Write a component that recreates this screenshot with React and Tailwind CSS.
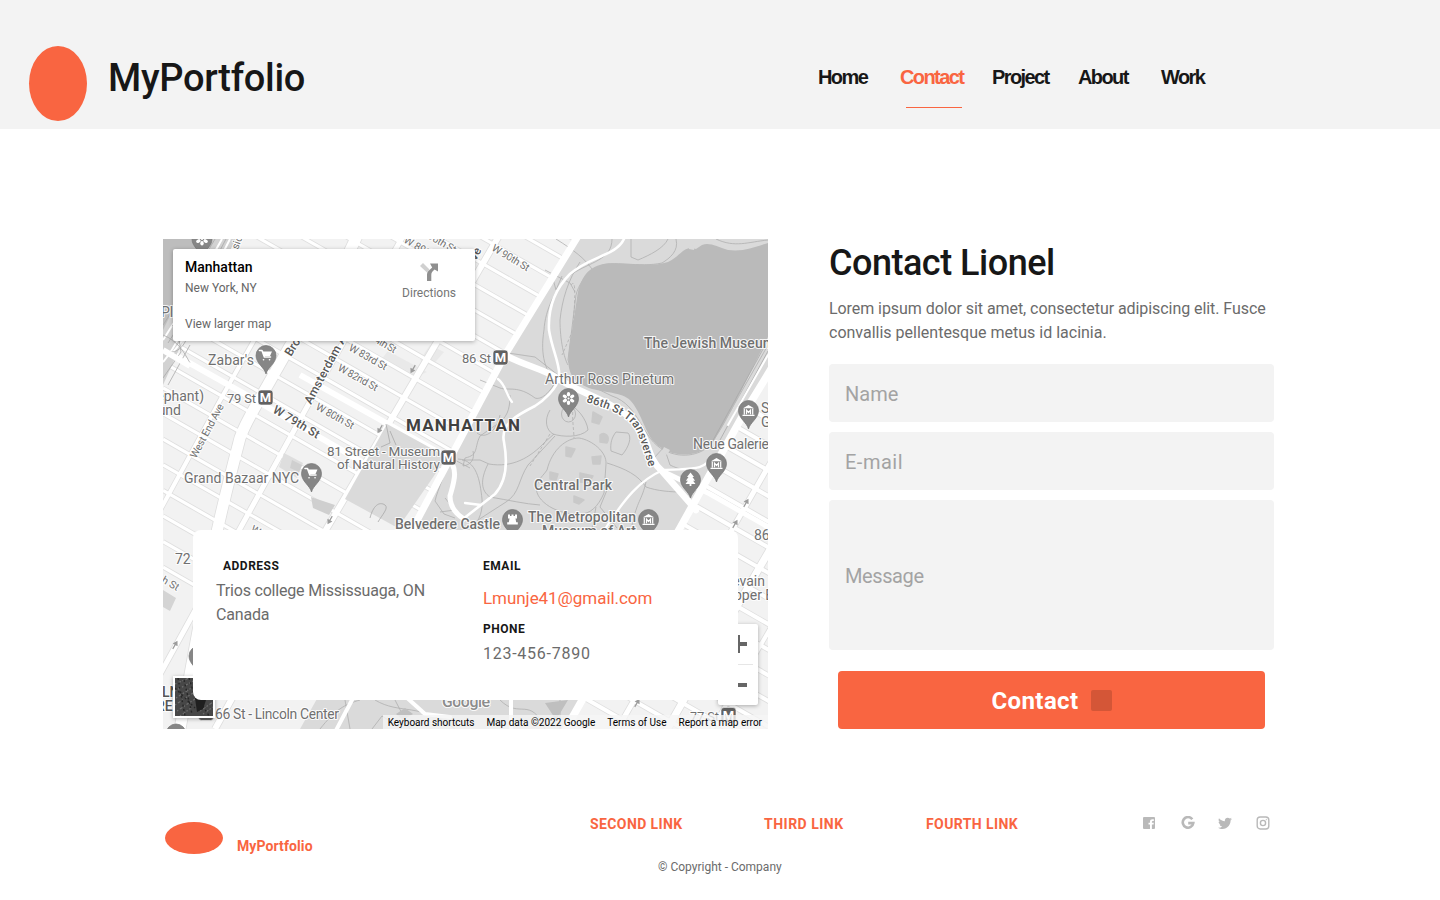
import React from "react";

const rot = (x, y, a) => `rotate(${a} ${x} ${y})`;

function Label({ x, y, size = 14, w, weight = 400, fill = "#707070", angle = 0, anchor = "start", halo = "#fff", children }) {
  return (
    <text
      x={x}
      y={y}
      fontSize={size}
      fontWeight={weight}
      fill={fill}
      textAnchor={anchor}
      textLength={w}
      transform={angle ? rot(x, y, angle) : undefined}
      stroke={halo}
      strokeWidth="2.2"
      strokeOpacity="0.85"
      strokeLinejoin="round"
      paintOrder="stroke"
    >
      {children}
    </text>
  );
}

const Cart = () => (
  <g>
    <path d="M-6.500 -5H-4L-1.600 1.500H4.500M-2.500 4.300h.1M3.500 4.300h.1" stroke="#fff" strokeWidth="1.600" fill="none" strokeLinecap="round" strokeLinejoin="round" />
    <path d="M-3.800 -4H6L4 .6H-2.200Z" fill="#fff" />
  </g>
);
const Museum = () => (
  <g fill="none" stroke="#fff" strokeWidth="1.200">
    <path d="M-5.500 -2.200L0 -5.400L5.500 -2.200Z" fill="#fff" stroke="none" />
    <path d="M-4.200 -2V4M4.200 -2V4M-6 4.800H6M-2 3.800V-.3L0 2L2 -.3V3.800" />
  </g>
);
const Tree = () => <path d="M0 -7L3.500 -2.600H2L4.600 1.200H2.600L5 4.400H.9V6.600H-.9V4.400H-5L-2.600 1.200H-4.600L-2 -2.600H-3.500Z" fill="#fff" />;
const Rook = () => <path d="M-4.500 -5h2v1.600h1.500V-5h2v1.600h1.500V-5h2v4h-1.500l.7 3.800h1.600V5H-5.300V2.800h1.600L-3 -1h-1.500Z" fill="#fff" />;
const Flower = () => (
  <g fill="#fff">
    {[0, 60, 120, 180, 240, 300].map((a) => (
      <ellipse key={a} cx="0" cy="-4.200" rx="1.700" ry="2.300" transform={`rotate(${a})`} />
    ))}
    <circle r="1.100" />
  </g>
);

function Pin({ x, y, children }) {
  return (
    <g transform={`translate(${x} ${y})`}>
      <path d="M0 18.500C-1.500 12 -10 8 -10 0A10 10 0 0 1 10 0C10 8 1.500 12 0 18.500Z" fill="#868686" stroke="#757575" strokeWidth=".7" />
      {children}
    </g>
  );
}

function Metro({ x, y }) {
  return (
    <g transform={`translate(${x} ${y})`}>
      <rect x="-7.500" y="-7.500" width="15" height="15" rx="3" fill="#616161" stroke="#fff" strokeWidth=".6" />
      <text y="4.600" fontSize="13" fontWeight="700" fill="#fff" textAnchor="middle">M</text>
    </g>
  );
}

const westStreets = Array.from({ length: 28 }, (_, i) => -124 + i * 25.6);
const eastStreets = Array.from({ length: 16 }, (_, i) => 300 + i * 25.6);
const westAves = [
  ["M360 229C340 275 318 310 290 346L258 402C250 416 244 426 240 438C229 480 221 510 211 560L180 729", 11],
  ["M407 229L308 405L225 556L130 729", 5],
  ["M503 229L437 342L327 528L215 729", 6],
  ["M300 259L223 395L163 505L120 580", 4],
];

function StreetMap() {
  return (
    <svg className="block h-full w-full" viewBox="163 239 605 490" fontFamily="Roboto, sans-serif">
      <defs>
        <clipPath id="west"><path d="M163 239H576L505 355L412 530L300 729H163Z" /></clipPath>
        <clipPath id="east"><path d="M768 375L680 528L565 729H768Z" /></clipPath>
      </defs>
      <rect x="163" y="239" width="605" height="490" fill="#dadada" />

      {/* western blocks */}
      <g clipPath="url(#west)">
        <rect x="163" y="239" width="413" height="490" fill="#f2f2f2" />
        <path d="M388 351L427 372L416 377L380 361ZM430 345L444 352L432 366L420 360Z" fill="#e9e9e9" />
        {["#dedede", "#fff"].map((c, n) => (
          <g key={c} stroke={c} fill="none">
            {westStreets.map((v) => (
              <path key={v} d={`M163 ${v}L600 ${v + 250}`} strokeWidth={n ? 3.2 : 4.8} />
            ))}
            {westAves.map(([d, w]) => (
              <path key={d} d={d} strokeWidth={n ? w : w + 1.6} />
            ))}
          </g>
        ))}
        <path d="M163 348L257 401L345 452L395 482" stroke="#fff" strokeWidth="6" fill="none" />
        <path d="M300 375L388 424L450 459" stroke="#fff" strokeWidth="6" fill="none" />
        {/* riverside */}
        <path d="M163 239H236L181 345L163 385Z" fill="#d2d2d2" />
        <path d="M163 239H208L163 330Z" fill="#bdbdbd" />
        <g fill="none" stroke="#fff" strokeWidth="2">
          <path d="M222 239L182 310L163 340M230 239L190 317C181 333 174 350 163 362M238 239L195 325L170 356" />
        </g>
        <g fill="none" stroke="#a9a9a9" strokeWidth=".8">
          <path d="M215 239L176 305L163 325M226 239L187 313L168 343M172 326C184 319 191 328 186 340C182 350 171 356 164 349M163 335C178 341 184 352 190 363M176 320L181 352L163 378M168 385L190 345" />
        </g>
        <path d="M163 350L190 366" stroke="#fff" strokeWidth="6" />
        {/* museum grounds */}
        <path d="M387 424L447 457L398 528L345 499Z" fill="#dadada" />
        <path d="M284 453L303 463L297 478L279 467Z" fill="#dedede" />
        <path d="M292 460L302 465L299 472L290 468ZM311 497L335 505L329 515L313 508Z" fill="#cfcfcf" />
        <path d="M163 590L176 598L170 611L163 607Z" fill="#d4d4d4" />
        <path d="M370 518C373 506 379 501 385 505C389 508 382 515 378 522M386 424L390 443L381 447M390 431L396 445" stroke="#a8a8a8" strokeWidth=".8" fill="none" />
      </g>

      {/* eastern blocks */}
      <g clipPath="url(#east)">
        <rect x="560" y="370" width="208" height="359" fill="#f2f2f2" />
        {["#dedede", "#fff"].map((c, n) => (
          <g key={c} stroke={c} fill="none">
            {eastStreets.map((v) => (
              <path key={v} d={`M560 ${v}L780 ${v + 126}`} strokeWidth={n ? 4 : 5.6} />
            ))}
            <path d="M795 420L733 528L610 742" strokeWidth={n ? 5 : 6.6} />
            <path d="M815 472L725 627L660 742" strokeWidth={n ? 7 : 8.6} />
            <path d="M810 560L712 729" strokeWidth={n ? 4 : 5.6} />
          </g>
        ))}
      </g>

      {/* park paths */}
      <g fill="none" stroke="#b0b0b0" strokeWidth=".8">
        <path d="M612 239C612 260 590 262 572 274C556 286 545 310 544 330C540 355 545 372 558 385M556 239C575 251 584 258 592 269M545 270L570 283L575 292M631 239V257L638 260C650 255 664 248 668 239M580 262C568 280 562 300 560 320C560 340 564 358 568 365M553 279L556 290L562 276" />
        <path d="M768 240C748 242 735 248 716 239M676 239C679 251 670 258 662 263C640 268 610 260 600 266C586 272 578 286 576 295L568 360L575 378L612 396C640 405 642 440 664 450C682 460 705 455 714 440L768 345" />
        <path d="M508 353L535 357L558 375M558 376C550 395 540 400 535 398C518 385 508 391 500 388L480 380" />
        <path d="M510 395C510 410 507 418 496 425L480 436C474 448 479 455 465 458L463 466C471 465 475 459 473 451M462 460H480L489 464C512 468 530 458 545 442L554 434" />
        <path d="M458 459C477 460 480 481 482 499C483 510 480 520 472 528M488 464C480 480 481 491 490 497C508 500 525 504 540 505M477 433C486 440 497 430 500 415M550 410C544 420 546 430 553 434C562 437 580 438 588 430C587 420 577 406 566 403" />
        <ellipse cx="568.500" cy="414" rx="7" ry="8" />
        <path d="M547 470C552 449 567 438 579 438C592 440 607 452 606 464L604 493C598 507 590 514 580 514C552 515 533 497 537 486C539 478 543 476 547 470Z" />
        <path d="M555 436L528 465C518 480 520 493 506 502L478 520M607 463C626 469 638 475 646 487C657 491 671 492 682 492M607 490L600 507L617 528M646 482C642 500 637 501 632 525M596 507L592 528" />
        <path d="M616 432L628 433C632 437 629 447 622 455L611 451C610 443 612 437 616 432ZM654 458L664 447L670 465C690 475 700 468 714 458" />
        <path d="M435 501C438 488 446 474 448 459M435 501L444 514L455 518M445 498L455 510L440 512M449 457L470 468" />
        <path d="M550 434L530 466M574 402C571 415 574 430 574 438M571 285C575 280 576 285 573 330L562 355" strokeDasharray="3 2" />
        <path d="M320 729C335 710 345 704 360 700M345 700L350 729M375 700C400 715 420 702 455 729M500 700C520 720 530 695 545 729M560 700V729M395 700L410 729M372 729L382 716L402 729" />
      </g>

      {/* reservoir */}
      <path d="M768 243C754 247 744 252 728 250C717 247 710 242 702 245L696 249C684 244 680 257 668 262C650 268 625 262 604 264C585 267 579 283 577 298L569 350C566 374 573 382 592 389C612 394 626 392 634 405C645 422 647 439 660 447C674 457 695 457 708 447C724 430 738 396 768 337Z" fill="#bababa" />
      <path d="M689 247L695 245L694 250L689 249ZM664 447L670 450L667 455L662 451Z" fill="#dadada" />
      <path d="M768 340L711 444M768 351L720 440" stroke="#a8a8a8" strokeWidth=".8" />

      {/* lawn patches */}
      <path d="M593 412L602 417L599 424L592 422ZM600 435C604 431 611 436 607 443L600 442ZM566 447L575 449L571 457L566 456ZM592 457L601 456L600 464L593 464ZM580 473L593 476L589 483L580 482ZM550 472L558 474L556 480L550 479ZM574 496L584 500L579 504L574 502Z" fill="#c9c9c9" stroke="#c9c9c9" strokeWidth="1.500" strokeLinejoin="round" />
      <path d="M405 708L413 714L403 720L396 714ZM545 703L568 700L556 720Z" fill="#bfbfbf" />

      {/* park roads */}
      <g fill="none" stroke="#fff" strokeLinecap="round" strokeLinejoin="round">
        <path d="M583 228L505 355L412 530" strokeWidth="7" />
        <path d="M790 338L743 415L680 528L560 739" strokeWidth="7.500" />
        <path d="M768 355L728 425" strokeWidth="2" />
        <path d="M624 239C616 256 590 256 570 274C554 290 548 310 549 330C552 350 561 366 559 377C557 389 543 401 535 406C517 415 500 424 504 442C508 464 506 482 495 494L463 519" strokeWidth="2.600" />
        <path d="M498 379C506 385 506 395 512 402M465 503L481 505M605 529C625 498 640 480 663 470C690 468 704 472 712 456" strokeWidth="2.300" />
        <path d="M505 355C525 366 548 370 560 380C585 395 611 401 634 421C650 438 646 457 662 471L696 510" strokeWidth="6.500" />
        <path d="M660 470L710 494L768 527" strokeWidth="5" />
        <path d="M447 459C460 467 453 485 450 496C450 506 456 514 464 519" strokeWidth="5" />
        <path d="M332 738L352 700M405 696L425 714L450 717M511 700V729" strokeWidth="4" />
      </g>
      <g fill="#9c9c9c" stroke="#9c9c9c" strokeWidth="1.200">
        {[
          [413, 369, 30],
          [380, 429, 30],
          [330, 520, 30],
          [746, 503, 210],
          [735, 524, 210],
          [175, 645, 210],
          [637, 703, 210],
        ].map(([x, y, a]) => (
          <path key={`${x}-${y}`} transform={`translate(${x} ${y}) rotate(${a})`} d="M0 -4.500V1M-1.800 .8L0 3.800L1.800 .8Z" />
        ))}
      </g>

      {/* street names */}
      <g>
        <Label x={491} y={250} size={10.5} angle={31} w={42}>W 90th St</Label>
        <Label x={427} y={238} size={10.5} angle={30} w={31}>90th St</Label>
        <Label x={403} y={242} size={10.5} angle={30} w={45}>W 89th St</Label>
        <Label x={374} y={342} size={10.5} angle={30} w={23}>4th St</Label>
        <Label x={348} y={350} size={10.5} angle={29} w={42}>W 83rd St</Label>
        <Label x={337} y={370} size={10.5} angle={29} w={44}>W 82nd St</Label>
        <Label x={315} y={409} size={10.5} angle={29} w={42}>W 80th St</Label>
        <Label x={272} y={412} size={12} angle={31} w={52} weight={500} fill="#585858">W 79th St</Label>
        <Label x={250} y={531} size={10.5} angle={30}>W 76th</Label>
        <Label x={161} y={582} size={10.5} angle={30}>h St</Label>
        <Label x={196} y={459} size={10.5} angle={-62} w={60}>West End Ave</Label>
        <Label x={311} y={405} size={12} angle={-62} w={76} weight={500} fill="#585858">Amsterdam A</Label>
        <Label x={291} y={357} size={12} angle={-58} weight={500} fill="#585858">Broadway</Label>
        <Label x={476} y={261} size={12} angle={-63} weight={500} fill="#585858">ve</Label>
        <Label x={238} y={250} size={10.5} angle={-70}>side Dr</Label>
      </g>
      <path id="transverse" d="M586 402C612 410 628 416 636 430C642 442 645 458 652 475" fill="none" />
      <text fontSize="11.500" fontWeight="500" fill="#585858" stroke="#fff" strokeWidth="2.500" paintOrder="stroke">
        <textPath href="#transverse" textLength="98">86th St Transverse</textPath>
      </text>

      {/* places */}
      <Label x={161} y={317}>Pl</Label>
      <Label x={208} y={365} w={46}>Zabar's</Label>
      <Label x={204} y={401} anchor="end">ephant)</Label>
      <Label x={181} y={415} anchor="end">ound</Label>
      <Label x={227} y={403} w={29} size={13}>79 St</Label>
      <Label x={462} y={363} w={29} size={13}>86 St</Label>
      <Label x={545} y={384} w={129}>Arthur Ross Pinetum</Label>
      <Label x={644} y={348} w={131} weight={500}>The Jewish Museum</Label>
      <Label x={693} y={449} w={76}>Neue Galerie</Label>
      <Label x={761} y={413}>So</Label>
      <Label x={761} y={427}>Gu</Label>
      <Label x={406} y={431} size={17} w={114} weight={700} fill="#404040">MANHATTAN</Label>
      <Label x={327} y={456} w={113} size={13.5}>81 Street - Museum</Label>
      <Label x={337} y={469} w={103} size={13.5}>of Natural History</Label>
      <Label x={184} y={483} w={115}>Grand Bazaar NYC</Label>
      <Label x={534} y={490} w={78} weight={500}>Central Park</Label>
      <Label x={395} y={529} w={105} weight={500}>Belvedere Castle</Label>
      <Label x={528} y={522} w={108} weight={500}>The Metropolitan</Label>
      <Label x={542} y={536} w={94} weight={500}>Museum of Art</Label>
      <Label x={175} y={564}>72 St</Label>
      <Label x={754} y={540}>86</Label>
      <Label x={765} y={586} anchor="end">Levain</Label>
      <Label x={734} y={600}>pper E</Label>
      <Label x={162} y={697} weight={500} fill="#555">LN</Label>
      <Label x={156} y={711} weight={500} fill="#555">RE</Label>
      <Label x={215} y={719} w={124}>66 St - Lincoln Center</Label>
      <Label x={690} y={721} size={13} w={29}>77 St</Label>
      <Label x={442} y={707} size={16} w={48} weight={500} fill="#8c8c8c">Google</Label>

      <Pin x={202} y={239}><Flower /></Pin>
      <Pin x={266} y={355.5}><Cart /></Pin>
      <Pin x={311.5} y={473.5}><Cart /></Pin>
      <Pin x={568.5} y={398.5}><Flower /></Pin>
      <Pin x={748.5} y={410.5}><Museum /></Pin>
      <Pin x={716.5} y={463.5}><Museum /></Pin>
      <Pin x={690.5} y={479.5}><Tree /></Pin>
      <Pin x={512.5} y={519.5}><Rook /></Pin>
      <Pin x={648.5} y={519.5}><Museum /></Pin>
      <Pin x={199} y={656} />
      <Pin x={176} y={734} />
      <Metro x={265.5} y={397.5} />
      <Metro x={500.5} y={357.5} />
      <Metro x={448.5} y={457.5} />
      <Metro x={206} y={713} />
      <Metro x={728.5} y={715} />
    </svg>
  );
}

function Satellite() {
  return (
    <svg className="block h-full w-full" viewBox="0 0 38 38">
      <rect width="38" height="38" fill="#474747" />
      <g stroke="#707070" strokeWidth="1.200" strokeDasharray="1.500 2 3 1.500">
        <path d="M0 6L14 0M0 13L20 2M1 20L18 9M0 27L18 15M2 33L20 21M5 38L16 30M28 36L38 29M25 33L38 24" />
      </g>
      <g stroke="#262626" strokeWidth="1.400" strokeDasharray="2 2.500">
        <path d="M3 0L10 38M9 2L17 36M0 10L20 30M14 0L21 22M28 28L34 38" />
      </g>
      <path d="M20 20L31 22L28 31L22 34Z" fill="#1f1f1f" />
    </svg>
  );
}

function MapPanel() {
  return (
    <div className="relative h-[490px] w-[605px] overflow-hidden">
      <StreetMap />
      <div className="absolute left-[10px] top-[10px] flex h-[92px] w-[302px] justify-between rounded-[2px] bg-white pl-3 pr-[19px] shadow-[0_1px_4px_rgba(0,0,0,0.3)]">
        <div className="flex flex-col pt-[10px] text-[12px] leading-4 text-[#666]">
          <span className="text-[14px] font-medium text-black">Manhattan</span>
          <span className="mt-[5px]">New York, NY</span>
          <span className="mt-5">View larger map</span>
        </div>
        <div className="flex flex-col items-center pt-[14px] text-[12px] leading-4 text-[#757575]">
          <svg className="h-[18px] w-[18px]" viewBox="0 0 18 18">
            <path d="M0 3L3 0L9.500 6.500L7 9.500Z" fill="#d0d0d0" />
            <path d="M7 18V11.500C7 8.500 9 7.500 12.200 4.500L10 .5H18V8.500L14.600 6.500C12.500 8.500 11.300 9.500 11.300 12V18Z" fill="#8f8f8f" />
          </svg>
          <span className="mt-1">Directions</span>
        </div>
      </div>
      <div className="absolute bottom-6 right-[10px] flex h-[81px] w-10 flex-col items-center rounded-[2px] bg-white shadow-[0_1px_4px_rgba(0,0,0,0.3)]">
        <div className="flex h-10 items-center">
          <svg className="h-[18px] w-[18px]" viewBox="0 0 18 18">
            <path d="M9 0V18M0 9H18" stroke="#666" strokeWidth="4" />
          </svg>
        </div>
        <div className="h-px w-[30px] bg-[#e6e6e6]" />
        <div className="flex h-10 items-center">
          <div className="h-1 w-[18px] bg-[#666]" />
        </div>
      </div>
      <div className="absolute bottom-[11px] left-[10px] h-[42px] w-[42px] border-2 border-white shadow-[0_1px_4px_rgba(0,0,0,0.3)]">
        <Satellite />
      </div>
      <div className="absolute bottom-0 right-0 flex h-[14px] items-center gap-3 bg-[#f5f5f5]/80 pl-[5px] pr-[6px] text-[10px] text-black">
        <span>Keyboard shortcuts</span>
        <span>Map data ©2022 Google</span>
        <span>Terms of Use</span>
        <span>Report a map error</span>
      </div>
      <div className="absolute left-[30px] top-[291px] flex h-[170px] w-[545px] rounded-lg bg-white pl-[23px] pt-[27px] text-[16px] text-[#6b6b6b]">
        <div className="w-[267px]">
          <div className="pl-[7px] text-[12px] font-bold leading-[18px] tracking-[0.5px] text-[#171717]">ADDRESS</div>
          <div className="mt-1 leading-6 tracking-[-0.19px]">
            Trios college Mississuaga, ON
            <br />
            Canada
          </div>
        </div>
        <div className="flex flex-col">
          <div className="text-[12px] font-bold leading-[18px] tracking-[0.5px] text-[#171717]">EMAIL</div>
          <div className="mt-[11px] text-[17px] leading-6 tracking-[-0.05px] text-[#f96541]">Lmunje41@gmail.com</div>
          <div className="mt-[10px] text-[12px] font-bold leading-[18px] tracking-[0.5px] text-[#171717]">PHONE</div>
          <div className="mt-1 leading-6 tracking-[0.74px]">123-456-7890</div>
        </div>
      </div>
    </div>
  );
}

function Header() {
  return (
    <header className="flex h-[129px] bg-[#f3f3f3]">
      <div className="ml-[29px] mt-[46px] h-[75px] w-[58px] rounded-[50%] bg-[#f96541]" />
      <div className="ml-[21px] mt-[54px] w-[710px] text-[38px] font-medium leading-[48px] tracking-[-0.3px] text-[#171717]">MyPortfolio</div>
      <nav className="mt-[65px] flex font-['Liberation_Sans',Arial,sans-serif] text-[20px] font-bold leading-6 tracking-[-1.6px] text-[#171717]">
        <a className="w-[82px]">Home</a>
        <a className="flex w-[92px] flex-col text-[#f96541]">
          Contact
          <span className="ml-[6px] mt-[18px] h-px w-[56px] bg-[#f96541]" />
        </a>
        <a className="w-[86px]">Project</a>
        <a className="w-[83px]">About</a>
        <a>Work</a>
      </nav>
    </header>
  );
}

function ContactForm() {
  return (
    <section className="flex w-[445px] flex-col">
      <h1 className="text-[36px] font-medium leading-[48px] tracking-[-0.5px] text-[#171717]">Contact Lionel</h1>
      <p className="mt-[10px] whitespace-nowrap text-[16px] leading-6 text-[#6b6b6b]">
        <span className="tracking-[-0.065px]">Lorem ipsum dolor sit amet, consectetur adipiscing elit. Fusce</span>
        <br />
        convallis pellentesque metus id lacinia.
      </p>
      <div className="mt-[19px] flex flex-col gap-[10px] text-[20px] text-[#a3a3a3]">
        <div className="flex h-[58px] items-center rounded bg-[#f3f3f3] px-4 pt-px">Name</div>
        <div className="flex h-[58px] items-center rounded bg-[#f3f3f3] px-4 pt-px tracking-[0.5px]">E-mail</div>
        <div className="flex h-[150px] items-center rounded bg-[#f3f3f3] px-4 pt-px tracking-[-0.4px]">Message</div>
      </div>
      <button className="mx-[9px] mt-[21px] flex h-[58px] items-center justify-center gap-3 rounded bg-[#f96541] text-[24px] font-bold tracking-[0.4px] text-white">
        <span className="pt-0.5">Contact</span>
        <span className="h-[21px] w-[21px] rounded-[2px] bg-black/15" />
      </button>
    </section>
  );
}

function Footer() {
  return (
    <footer className="mt-[85px] flex h-[86px] text-[14px] font-bold leading-5 text-[#f96541]">
      <div className="ml-[165px] mt-2 h-8 w-[58px] rounded-[50%] bg-[#f96541]" />
      <div className="ml-[14px] mt-[22px] w-[353px] tracking-[0.1px]">MyPortfolio</div>
      <div className="flex w-[553px] flex-col">
        <div className="flex tracking-[0.4px]">
          <a className="w-[174px]">SECOND LINK</a>
          <a className="w-[162px] tracking-[0.5px]">THIRD LINK</a>
          <a>FOURTH LINK</a>
        </div>
        <div className="ml-[68px] mt-[23px] text-[12px] font-normal text-[#6b6b6b]">© Copyright - Company</div>
      </div>
      <div className="mt-px flex h-4 items-center text-[#b9b9b9]">
        <svg className="h-[14px] w-[12px]" viewBox="0 0 12 14">
          <path fill="currentColor" d="M1 1H11Q12 1 12 2V12Q12 13 11 13H8.900V8.600H10.500L10.800 6.800H8.900V5.800Q8.900 4.900 9.800 4.900H10.800V3.300Q7 2.700 7 5.600V6.800H5.500V8.600H7V13H1Q0 13 0 12V2Q0 1 1 1Z" />
        </svg>
        <svg className="ml-[26px] h-[14px] w-[14px]" viewBox="0 0 14 14">
          <path fill="none" stroke="currentColor" strokeWidth="2.600" d="M11.300 3.200A5.300 5.300 0 1 0 12.300 7.100H7.200" />
        </svg>
        <svg className="ml-[22px] h-[16px] w-[16px]" viewBox="0 0 24 24">
          <path fill="currentColor" d="M22.460 6c-.77.350-1.600.580-2.460.690.880-.530 1.560-1.370 1.880-2.380-.830.500-1.750.850-2.720 1.050C18.370 4.500 17.260 4 16 4c-2.350 0-4.270 1.920-4.270 4.290 0 .340.040.670.110.980C8.280 9.090 5.110 7.380 3 4.790c-.370.630-.580 1.370-.580 2.150 0 1.490.750 2.810 1.910 3.560-.710 0-1.370-.200-1.950-.500v.030c0 2.080 1.480 3.820 3.440 4.210a4.220 4.220 0 0 1-1.930.070 4.280 4.280 0 0 0 4 2.980 8.521 8.521 0 0 1-5.330 1.840c-.340 0-.680-.020-1.020-.060C3.440 20.290 5.700 21 8.120 21 16 21 20.330 14.460 20.330 8.790c0-.190 0-.370-.010-.560.840-.600 1.560-1.360 2.140-2.230z" />
        </svg>
        <svg className="ml-[23px] h-[14px] w-[14px]" viewBox="0 0 14 14" fill="none" stroke="currentColor" strokeWidth="1.400">
          <rect x="1.200" y="1" width="11.600" height="12" rx="3" />
          <circle cx="7" cy="7" r="2.600" />
          <circle cx="10.300" cy="3.600" r=".3" strokeWidth=".8" />
        </svg>
      </div>
    </footer>
  );
}

export default function App() {
  return (
    <div className="flex h-[900px] w-[1440px] flex-col overflow-hidden bg-white font-[Roboto,sans-serif]">
      <Header />
      <main className="ml-[163px] mt-[110px] flex gap-[61px]">
        <MapPanel />
        <ContactForm />
      </main>
      <Footer />
    </div>
  );
}
